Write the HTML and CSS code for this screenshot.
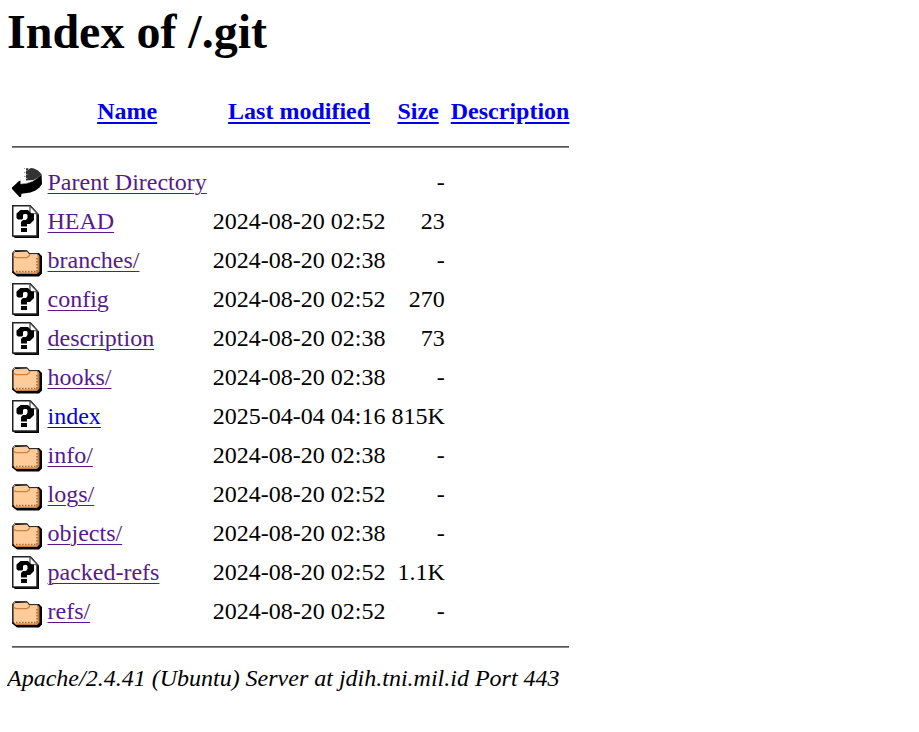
FILE: index.html
```html
<!DOCTYPE html>
<html lang="en">
<head>
<meta charset="utf-8">
<title>Index of /.git</title>
<link rel="stylesheet" href="styles.css">
</head>
<body>
<svg class="defs" aria-hidden="true">
  <symbol id="back" viewBox="0 0 30 33">
    <path fill="#333" d="M13 3l2-1 2 1 2-1 3 .5 4 2 3.500 3.500-3 3.500-5 2.500-7.500.500v-12z"/>
    <path fill="#999" d="M12 2h1v1h-1zM14 4h1.500v1H14zM12 6h1.500v1H12zM14 8h1.500v1H14zM12 10h1.500v1H12zM14 12h1.500v1H14zM16 3h1v1h-1z"/>
    <path fill="#000" d="M29.500 8L30 18l-2.500 3.500-4 3-5 2-9 1.300-.5 3.200L7.500 31 0 23v-1.500l7-6.500 1.500-.5v3.500l6-.5 6-2 5-3.500z"/>
    <path fill="none" stroke="#888" stroke-width=".5" d="M9 18l6-.8 6-2.200 5-3.500 3.500-3"/>
  </symbol>
  <symbol id="unknown" viewBox="0 0 30 33">
    <path fill="#000" d="M3 1h16l8 8.500V33H3l-3-2.500z"/>
    <path fill="#fff" stroke="#222" stroke-width="1.500" d="M.75.75h17.500L25 8.500v22.500H.75z"/>
    <path fill="#fff" stroke="#444" stroke-width="1.200" d="M18 .75v8h7.500z"/>
    <path fill="#000" d="M4.500 8.500L8.500 5H16l3.500 3.500H22v6.500L18 19h-3v2.500H9v-4.500l2-2h3l1.500-2v-3L14.500 9H12l-1 1v3.500l-1 1H6l-1.500-1.500zM9 23h6v4H9z"/>
  </symbol>
  <symbol id="folder" viewBox="0 -.6 30 33">
    <path fill="#000" d="M2 8l2-2h11l2.500 2.500H27l3 3V29l-3 3H5l-5-4V9z"/>
    <path fill="#c98245" d="M24 11l2.500-1 1 2v15L25 29.500H4l-2-2z"/>
    <path fill="#fc9" d="M1.500 9L3 7.500 15 7l2 2.500h8.500v16L24 28H3L1.500 26.500z"/>
    <path fill="none" stroke="#333" d="M.5 27V8.500l2-2.500H15l2.500 3H26"/>
    <path fill="none" stroke="#c98245" stroke-width="1.300" d="M2 12l2 1h11l2-1.500 1-2"/>
    <path fill="none" stroke="#a8683a" stroke-width="1.500" stroke-dasharray="1.500 1.500" d="M4 27h21V13"/>
  </symbol>
</svg>
<h1>Index of /.git</h1>
<table>
<tr class="head"><th></th><th><a href="#n">Name</a></th><th><a href="#m">Last modified</a></th><th><a href="#s">Size</a></th><th><a href="#d">Description</a></th></tr>
<tr><th colspan="5"><hr></th></tr>
<tr><td><svg class="icon"><use href="#back"/></svg></td><td><a class="visited" href="#">Parent Directory</a></td><td></td><td>-</td><td></td></tr>
<tr><td><svg class="icon"><use href="#unknown"/></svg></td><td><a class="visited" href="#">HEAD</a></td><td>2024-08-20 02:52</td><td>23</td><td></td></tr>
<tr><td><svg class="icon"><use href="#folder"/></svg></td><td><a class="visited" href="#">branches/</a></td><td>2024-08-20 02:38</td><td>-</td><td></td></tr>
<tr><td><svg class="icon"><use href="#unknown"/></svg></td><td><a class="visited" href="#">config</a></td><td>2024-08-20 02:52</td><td>270</td><td></td></tr>
<tr><td><svg class="icon"><use href="#unknown"/></svg></td><td><a class="visited" href="#">description</a></td><td>2024-08-20 02:38</td><td>73</td><td></td></tr>
<tr><td><svg class="icon"><use href="#folder"/></svg></td><td><a class="visited" href="#">hooks/</a></td><td>2024-08-20 02:38</td><td>-</td><td></td></tr>
<tr><td><svg class="icon"><use href="#unknown"/></svg></td><td><a href="#index">index</a></td><td>2025-04-04 04:16</td><td>815K</td><td></td></tr>
<tr><td><svg class="icon"><use href="#folder"/></svg></td><td><a class="visited" href="#">info/</a></td><td>2024-08-20 02:38</td><td>-</td><td></td></tr>
<tr><td><svg class="icon"><use href="#folder"/></svg></td><td><a class="visited" href="#">logs/</a></td><td>2024-08-20 02:52</td><td>-</td><td></td></tr>
<tr><td><svg class="icon"><use href="#folder"/></svg></td><td><a class="visited" href="#">objects/</a></td><td>2024-08-20 02:38</td><td>-</td><td></td></tr>
<tr><td><svg class="icon"><use href="#unknown"/></svg></td><td><a class="visited" href="#">packed-refs</a></td><td>2024-08-20 02:52</td><td>1.1K</td><td></td></tr>
<tr><td><svg class="icon"><use href="#folder"/></svg></td><td><a class="visited" href="#">refs/</a></td><td>2024-08-20 02:52</td><td>-</td><td></td></tr>
<tr><th colspan="5"><hr></th></tr>
</table>
<address>Apache/2.4.41 (Ubuntu) Server at jdih.tni.mil.id Port 443</address>
</body>
</html>
```
FILE: styles.css
```css
body {
  margin: 4px 7px 0;
  background: #fff;
  color: #000;
  font: 24px/27px "Liberation Serif", serif;
}
.defs {
  position: absolute;
  width: 0;
  height: 0;
}
h1 {
  margin: 0 0 32px;
  font-size: 48px;
  line-height: 55px;
}
table {
  border-spacing: 3px;
}
td, th {
  padding: 1.5px;
  white-space: nowrap;
}
.head th {
  height: 32px;
}
td {
  height: 33px;
  line-height: 33px;
}
td:nth-child(3),
td:nth-child(4) {
  text-align: right;
}
.icon {
  display: block;
  width: 30px;
  height: 33px;
}
hr {
  height: 2px;
  margin: 12px 0;
  border: 0;
  background: linear-gradient(#555 50%, #888 50%);
}
a {
  color: #00e;
  text-decoration: underline 1px;
  text-underline-offset: 3px;
}
th a {
  text-decoration-thickness: 2px;
}
a.visited {
  color: #551a8b;
}
address {
  margin-top: 1px;
  font-style: italic;
}
```
